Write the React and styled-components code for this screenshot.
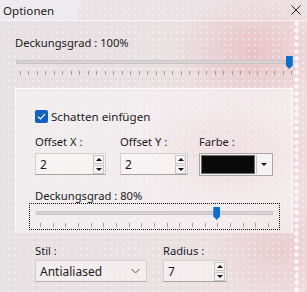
import React from 'react';
import styled, { createGlobalStyle } from 'styled-components';

const GlobalStyle = createGlobalStyle`
  html, body {
    margin: 0;
    padding: 0;
  }
  body {
    font-family: "Noto Sans", "Open Sans", sans-serif;
    font-size: 11.2px;
    color: #1c1a1b;
  }
`;

const Window = styled.div`
  position: relative;
  width: 307px;
  height: 292px;
  overflow: hidden;
  display: flex;
  flex-direction: column;
  background:
    radial-gradient(circle, rgba(255, 255, 255, 0.35) 0.7px, transparent 1.2px) 0 0 / 6px 6px,
    radial-gradient(ellipse 40% 28% at 74% 52%, rgba(210, 105, 118, 0.3), transparent 70%),
    radial-gradient(ellipse 35% 30% at 82% 18%, rgba(220, 130, 142, 0.3), transparent 70%),
    radial-gradient(ellipse 30% 25% at 90% 85%, rgba(215, 140, 150, 0.22), transparent 70%),
    linear-gradient(90deg, #e6e1e3 0%, #e8e1e3 40%, #efdde0 100%);
`;

const DotStrip = styled.div`
  position: absolute;
  top: 20px;
  right: 6px;
  width: 9px;
  bottom: 0;
  background: radial-gradient(circle, rgba(255, 255, 255, 0.75) 2px, transparent 2.6px) 0 0 / 9px 7px;
  pointer-events: none;
`;

const TitleBar = styled.div`
  position: relative;
  height: 20px;
  display: flex;
  align-items: center;
  justify-content: space-between;
  padding: 0 6px 0 3px;
  font-size: 11.6px;
  background: linear-gradient(100deg, rgba(240, 238, 242, 0.75) 0 26%, rgba(236, 232, 236, 0.3) 26%);
  border-bottom: 1px solid rgba(255, 255, 255, 0.5);
`;

const Section = styled.div`
  position: relative;
  padding: 0 14px 0 15px;
`;

const Label = styled.div`
  line-height: 16px;
  margin-top: ${({ $mt }) => $mt || 0}px;
  white-space: nowrap;
`;

const FocusBox = styled.div`
  margin: -1px -1px 0 -6px;
  padding: 6px 6px 2px 6px;
  border: 1px dotted #111;
`;

const Rail = styled.div`
  position: relative;
  height: 2px;
  background: #d8d4d6;
  border: 1px solid #c9c5c7;
  margin: ${({ $m }) => $m || 0};
`;

const Thumb = styled.div`
  position: absolute;
  top: -5px;
  width: 7px;
  height: 13px;
  margin-left: -3.5px;
  background: #0a6fd1;
  clip-path: polygon(0 0, 100% 0, 100% 72%, 50% 100%, 0 72%);
`;

const Ticks = styled.div`
  display: flex;
  justify-content: space-between;
  margin: ${({ $m }) => $m};
`;

const Tick = styled.span`
  width: 1px;
  height: 4px;
  background: #a39d9f;
`;

function Slider({ value, ticks, railMargin, tickMargin }) {
  return (
    <>
      <Rail $m={railMargin}>
        <Thumb style={{ left: `${value}%` }} />
      </Rail>
      <Ticks $m={tickMargin}>
        {Array.from({ length: ticks }).map((_, i) => (
          <Tick key={i} />
        ))}
      </Ticks>
    </>
  );
}

const Panel = styled.div`
  position: relative;
  margin: 13px 14px 0 15px;
  padding: 19px 13px 3px 19px;
  background: rgba(247, 244, 246, 0.62);
  border: 1px solid rgba(255, 255, 255, 0.75);
  border-bottom: none;
`;

const CheckRow = styled.label`
  display: flex;
  align-items: center;
  gap: 3px;
  font-size: 11.6px;
  height: 16px;
`;

const CheckBox = styled.span`
  width: 13px;
  height: 13px;
  border-radius: 2px;
  background: #1161c2;
  display: flex;
  align-items: center;
  justify-content: center;
`;

const FieldGrid = styled.div`
  display: grid;
  grid-template-columns: 85px 79px 74px;
  margin-top: 10px;
`;

const Field = styled.div`
  display: flex;
  flex-direction: column;
  gap: ${({ $gap }) => ($gap === undefined ? 3 : $gap)}px;
`;

const InputBox = styled.div`
  height: 22px;
  width: ${({ $w }) => $w}px;
  box-sizing: border-box;
  border: 1px solid #d3cfd0;
  border-bottom-color: #a8a4a6;
  background: rgba(251, 247, 248, 0.55);
  display: flex;
  align-items: center;
  padding-left: 4px;
  font-size: 12px;
`;

const Value = styled.span`
  flex: 1;
`;

const SpinCol = styled.div`
  display: flex;
  flex-direction: column;
  gap: 1px;
  margin-right: 1px;
`;

const SpinBtn = styled.span`
  width: 11px;
  height: 9px;
  box-sizing: border-box;
  border: 1px solid #c8c4c6;
  background: #f4f2f3;
  display: flex;
  align-items: center;
  justify-content: center;
`;

const Arrow = styled.span`
  width: 0;
  height: 0;
  border-left: 3px solid transparent;
  border-right: 3px solid transparent;
  ${({ $up }) => ($up ? 'border-bottom: 3px solid #111;' : 'border-top: 3px solid #111;')}
`;

function SpinBox({ value, width }) {
  return (
    <InputBox $w={width}>
      <Value>{value}</Value>
      <SpinCol>
        <SpinBtn>
          <Arrow $up />
        </SpinBtn>
        <SpinBtn>
          <Arrow />
        </SpinBtn>
      </SpinCol>
    </InputBox>
  );
}

const ColorCombo = styled.div`
  width: 74px;
  height: 23px;
  box-sizing: border-box;
  border: 1px solid #a9a5a7;
  background: #f4f2f3;
  display: flex;
  padding: 1px;
  gap: 1px;
`;

const Swatch = styled.div`
  flex: 1;
  background: #0b0a0a;
  border: 1px solid #6f6b6d;
`;

const DropBtn = styled.div`
  width: 14px;
  display: flex;
  align-items: center;
  justify-content: center;
  border-left: 1px solid #c8c4c6;
`;

const BottomRow = styled.div`
  position: relative;
  display: flex;
  gap: 16px;
  padding: 10px 0 0 35px;
`;

const Select = styled.div`
  width: 112px;
  height: 22px;
  box-sizing: border-box;
  border: 1px solid #d3cfd0;
  border-bottom-color: #b8b4b6;
  background: rgba(251, 247, 248, 0.5);
  display: flex;
  align-items: center;
  justify-content: space-between;
  padding: 0 6px 0 4px;
  font-size: 12px;
`;

export default function App() {
  return (
    <>
      <GlobalStyle />
      <Window>
        <DotStrip />
        <TitleBar>
          <span>Optionen</span>
          <svg width="10" height="10" viewBox="0 0 10 10">
            <path d="M0.5 0.5 L9.5 9.5 M9.5 0.5 L0.5 9.5" stroke="#222" strokeWidth="1" />
          </svg>
        </TitleBar>
        <Section>
          <Label $mt={14}>Deckungsgrad : 100%</Label>
          <Slider value={99} ticks={33} railMargin="9px 0 0 1px" tickMargin="7px 1px 0 5px" />
        </Section>
        <Panel>
          <CheckRow>
            <CheckBox>
              <svg width="9" height="7" viewBox="0 0 9 7">
                <path d="M1 3.6 L3.4 6 L8 1" fill="none" stroke="#fff" strokeWidth="1.2" />
              </svg>
            </CheckBox>
            Schatten einfügen
          </CheckRow>
          <FieldGrid>
            <Field>
              <Label>Offset X :</Label>
              <SpinBox value="2" width={71} />
            </Field>
            <Field>
              <Label>Offset Y :</Label>
              <SpinBox value="2" width={68} />
            </Field>
            <Field>
              <Label>Farbe :</Label>
              <ColorCombo>
                <Swatch />
                <DropBtn>
                  <Arrow />
                </DropBtn>
              </ColorCombo>
            </Field>
          </FieldGrid>
          <Label $mt={12}>Deckungsgrad : 80%</Label>
          <FocusBox>
            <Slider value={76.5} ticks={19} railMargin="1px 0 0 0" tickMargin="8px 4px 0 4px" />
          </FocusBox>
        </Panel>
        <BottomRow>
          <Field $gap={1}>
            <Label>Stil :</Label>
            <Select>
              <span>Antialiased</span>
              <svg width="9" height="6" viewBox="0 0 9 6">
                <path d="M0.5 1 L4.5 5 L8.5 1" fill="none" stroke="#555" strokeWidth="1" />
              </svg>
            </Select>
          </Field>
          <Field $gap={1}>
            <Label>Radius :</Label>
            <SpinBox value="7" width={64} />
          </Field>
        </BottomRow>
      </Window>
    </>
  );
}
